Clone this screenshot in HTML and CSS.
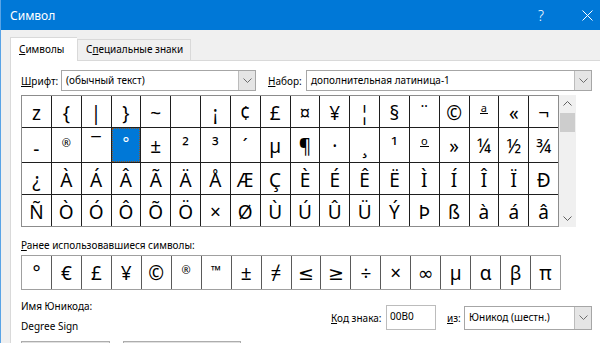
FILE: index.html
```html
<!DOCTYPE html>
<html lang="ru">
<head>
    <meta charset="UTF-8">
    <title>Символ</title>
    <link rel="stylesheet" href="styles.css">
</head>
<body>
    <div class="dialog">
        <div class="titlebar">
            <span class="title">Символ</span>
            <span class="tb-btn tb-help">?</span>
            <span class="tb-btn">
                <svg width="11" height="11" viewBox="0 0 11 11"><path d="M0.5 0.5 L10.5 10.5 M10.5 0.5 L0.5 10.5" stroke="#fff" stroke-width="1"/></svg>
            </span>
        </div>
        <div class="tabs">
            <div class="tab active"><u>С</u>имволы</div>
            <div class="tab">С<u>п</u>ециальные знаки</div>
        </div>
        <div class="panel">
            <div class="row-top">
                <label class="lbl-font"><u>Ш</u>рифт:</label>
                <div class="combo font-combo">
                    <span class="combo-text">(обычный текст)</span>
                    <span class="drop"><svg width="9" height="5" viewBox="0 0 9 5"><path d="M0.5 0.5 L4.5 4.5 L8.5 0.5" fill="none" stroke="#6d6d6d"/></svg></span>
                </div>
                <label class="lbl-set"><u>Н</u>абор:</label>
                <div class="combo set-combo">
                    <span class="combo-text">дополнительная латиница-1</span>
                    <span class="drop"><svg width="9" height="5" viewBox="0 0 9 5"><path d="M0.5 0.5 L4.5 4.5 L8.5 0.5" fill="none" stroke="#6d6d6d"/></svg></span>
                </div>
            </div>

            <div class="charmap">
                <div class="grid">
                    <div class="cell">z</div><div class="cell">{</div><div class="cell">|</div><div class="cell">}</div><div class="cell">~</div><div class="cell"></div><div class="cell">¡</div><div class="cell">¢</div><div class="cell">£</div><div class="cell">¤</div><div class="cell">¥</div><div class="cell">¦</div><div class="cell">§</div><div class="cell">¨</div><div class="cell">©</div><div class="cell"><span class="ord">a</span></div><div class="cell">«</div><div class="cell">¬</div>
                    <div class="cell low">-</div><div class="cell"><span class="sm">®</span></div><div class="cell">¯</div><div class="cell selected">°</div><div class="cell">±</div><div class="cell">²</div><div class="cell">³</div><div class="cell">´</div><div class="cell">µ</div><div class="cell">¶</div><div class="cell">·</div><div class="cell">¸</div><div class="cell">¹</div><div class="cell"><span class="ord">o</span></div><div class="cell">»</div><div class="cell">¼</div><div class="cell">½</div><div class="cell">¾</div>
                    <div class="cell">¿</div><div class="cell">À</div><div class="cell">Á</div><div class="cell">Â</div><div class="cell">Ã</div><div class="cell">Ä</div><div class="cell">Å</div><div class="cell">Æ</div><div class="cell">Ç</div><div class="cell">È</div><div class="cell">É</div><div class="cell">Ê</div><div class="cell">Ë</div><div class="cell">Ì</div><div class="cell">Í</div><div class="cell">Î</div><div class="cell">Ï</div><div class="cell">Ð</div>
                    <div class="cell">Ñ</div><div class="cell">Ò</div><div class="cell">Ó</div><div class="cell">Ô</div><div class="cell">Õ</div><div class="cell">Ö</div><div class="cell">×</div><div class="cell">Ø</div><div class="cell">Ù</div><div class="cell">Ú</div><div class="cell">Û</div><div class="cell">Ü</div><div class="cell">Ý</div><div class="cell">Þ</div><div class="cell">ß</div><div class="cell">à</div><div class="cell">á</div><div class="cell">â</div>
                </div>
                <div class="scrollbar">
                    <span class="sb-arrow"><svg width="9" height="5" viewBox="0 0 9 5"><path d="M0.5 4.5 L4.5 0.5 L8.5 4.5" fill="none" stroke="#606060"/></svg></span>
                    <span class="sb-thumb"></span>
                    <span class="sb-space"></span>
                    <span class="sb-arrow"><svg width="9" height="5" viewBox="0 0 9 5"><path d="M0.5 0.5 L4.5 4.5 L8.5 0.5" fill="none" stroke="#606060"/></svg></span>
                </div>
            </div>

            <div class="recent-label"><u>Р</u>анее использовавшиеся символы:</div>
            <div class="recent">
                <div class="cell">°</div><div class="cell">€</div><div class="cell">£</div><div class="cell">¥</div><div class="cell">©</div><div class="cell"><span class="sm">®</span></div><div class="cell"><span class="tm">™</span></div><div class="cell">±</div><div class="cell">≠</div><div class="cell">≤</div><div class="cell">≥</div><div class="cell">÷</div><div class="cell">×</div><div class="cell">∞</div><div class="cell">µ</div><div class="cell">α</div><div class="cell">β</div><div class="cell">π</div>
            </div>

            <div class="info">
                <div class="uname">
                    <div>Имя Юникода:</div>
                    <div>Degree Sign</div>
                </div>
                <div class="code">
                    <label class="lbl-code"><u>К</u>од знака:</label>
                    <div class="input">00B0</div>
                    <label class="lbl-from"><u>и</u>з:</label>
                    <div class="combo from-combo">
                        <span class="combo-text">Юникод (шестн.)</span>
                        <span class="drop"><svg width="9" height="5" viewBox="0 0 9 5"><path d="M0.5 0.5 L4.5 4.5 L8.5 0.5" fill="none" stroke="#6d6d6d"/></svg></span>
                    </div>
                </div>
            </div>

            <div class="buttons">
                <div class="btn btn-auto"></div>
                <div class="btn btn-keys"></div>
            </div>
        </div>
    </div>
</body>
</html>
```

FILE: styles.css
```css
* {
    box-sizing: border-box;
}
body {
    margin: 0;
    width: 600px;
    height: 343px;
    overflow: hidden;
    font-family: "Noto Sans", "DejaVu Sans", sans-serif;
    font-size: 10px;
    color: #000;
    background-color: #f0f0f0;
}
.dialog {
    width: 610px;
    height: 343px;
    border-left: 1px solid #5aa4e6;
    background-color: #f0f0f0;
    overflow: hidden;
}
.titlebar {
    height: 30px;
    background-color: #0078d7;
    color: #fff;
    display: flex;
    align-items: center;
    padding-left: 9px;
}
.title {
    flex: 1;
    font-size: 12px;
}
.tb-btn {
    width: 46px;
    height: 30px;
    display: flex;
    align-items: center;
    justify-content: center;
}
.tb-help {
    font-size: 14px;
    font-weight: 300;
}
.tabs {
    height: 30px;
    display: flex;
    align-items: flex-end;
    padding-left: 9px;
}
.tab {
    height: 21px;
    border: 1px solid #d9d9d9;
    border-bottom: none;
    padding-left: 8px;
    line-height: 19px;
    background-color: #f0f0f0;
    white-space: nowrap;
}
.tab.active {
    width: 67px;
    height: 24px;
    margin-bottom: -1px;
    background-color: #fff;
    line-height: 22px;
    position: relative;
    border-right: none;
}
.tab:not(.active) {
    width: 114px;
}
.panel {
    height: 284px;
    background-color: #fff;
    border: 1px solid #d9d9d9;
    border-bottom: none;
    margin-left: 9px;
    padding: 9px 0 0 10px;
    overflow: hidden;
}
.row-top {
    display: flex;
    align-items: center;
    height: 21px;
}
.lbl-font {
    width: 40px;
}
.lbl-set {
    width: 38px;
    margin-left: 12px;
}
.combo {
    height: 21px;
    display: flex;
    align-items: stretch;
    border: 1px solid #a6a6a6;
    background-color: #fff;
}
.combo-text {
    flex: 1;
    padding-left: 4px;
    line-height: 18px;
    white-space: nowrap;
    overflow: hidden;
}
.drop {
    width: 17px;
    background-color: #e5e5e5;
    border-left: 1px solid #bcbcbc;
    display: flex;
    align-items: center;
    justify-content: center;
}
.font-combo {
    width: 195px;
}
.set-combo {
    width: 286px;
}
.charmap {
    display: flex;
    margin-top: 4px;
    height: 132px;
}
.grid {
    width: 538px;
    display: grid;
    grid-template-columns: repeat(18, 1fr);
    grid-template-rows: repeat(4, 1fr);
    gap: 1px;
    background-color: #1e1e1e;
    border: 1px solid #8c8c8c;
}
.cell {
    background-color: #fff;
    display: flex;
    align-items: center;
    justify-content: center;
    font-size: 19px;
    padding-top: 2px;
}
.cell.low {
    padding-top: 8px;
}
.cell.selected {
    background-color: #0078d7;
    color: #fff;
    border: 1px dotted #8b5a2b;
    padding-bottom: 6px;
    font-size: 16px;
}
.sm {
    font-size: 11px;
    margin-bottom: 8px;
}
.tm {
    font-size: 13px;
    margin-bottom: 6px;
}
.ord {
    font-size: 11px;
    line-height: 11px;
    border-bottom: 1px solid #000;
    margin-bottom: 10px;
    padding: 0 1px;
}
.scrollbar {
    width: 17px;
    background-color: #f0f0f0;
    display: flex;
    flex-direction: column;
}
.sb-arrow {
    height: 17px;
    display: flex;
    align-items: center;
    justify-content: center;
}
.sb-thumb {
    height: 19px;
    margin: 1px 1px 0;
    background-color: #cdcdcd;
}
.sb-space {
    flex: 1;
}
.recent-label {
    margin-top: 11px;
    line-height: 15px;
}
.recent {
    width: 540px;
    height: 35px;
    margin-top: 2px;
    display: grid;
    grid-template-columns: repeat(18, 1fr);
    gap: 1px;
    background-color: #5a5a5a;
    border: 1px solid #a0a0a0;
}
.recent .cell {
    padding-top: 1px;
}
.info {
    display: flex;
    margin-top: 6px;
    height: 40px;
    line-height: 20px;
}
.uname {
    width: 310px;
}
.code {
    display: flex;
    align-items: center;
    height: 25px;
    margin-top: 9px;
}
.lbl-code {
    width: 55px;
}
.input {
    width: 50px;
    height: 25px;
    border: 1px solid #bcbcbc;
    padding-left: 3px;
    line-height: 21px;
}
.lbl-from {
    width: 17px;
    margin-left: 11px;
}
.from-combo {
    width: 128px;
    height: 24px;
}
.from-combo .combo-text {
    line-height: 21px;
}
.buttons {
    display: flex;
    margin-top: 5px;
}
.btn {
    height: 24px;
    background-color: #e1e1e1;
    border: 1px solid #adadad;
}
.btn-auto {
    width: 89px;
}
.btn-keys {
    width: 118px;
    margin-left: 13px;
}
```
